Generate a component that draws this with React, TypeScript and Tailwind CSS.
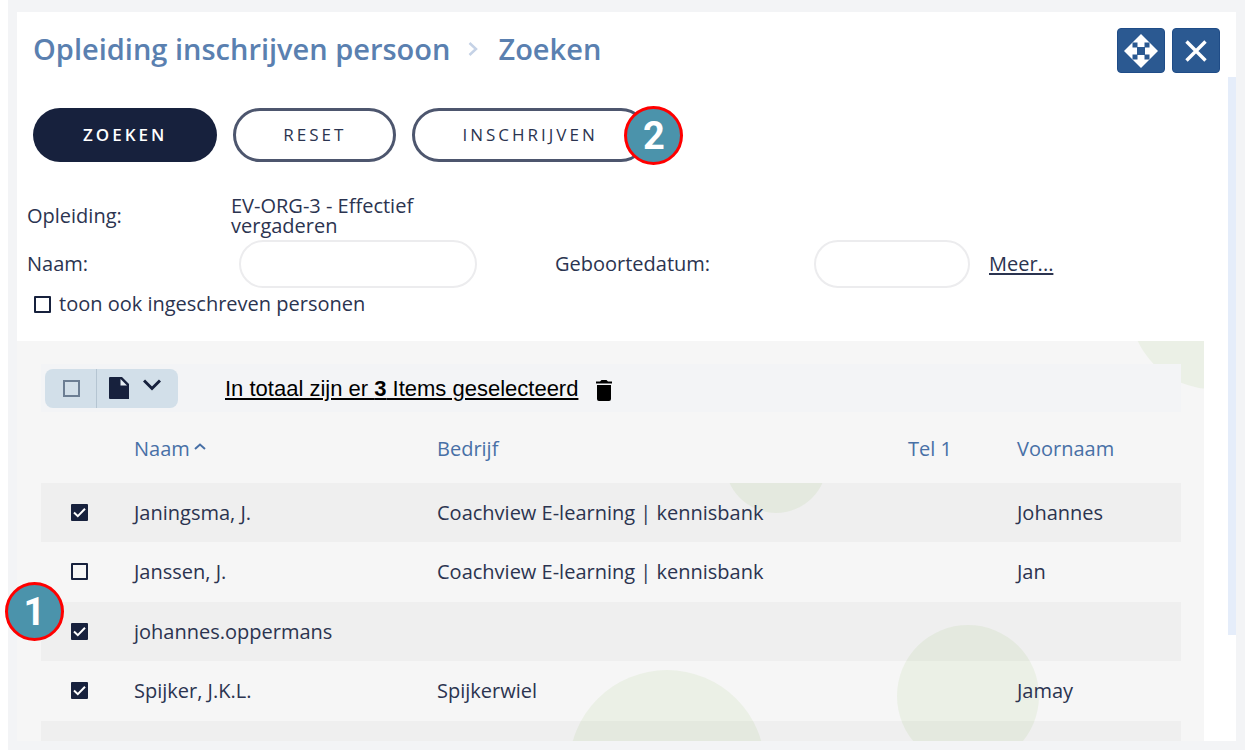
import React from 'react';

interface Person {
  name: string;
  company: string;
  phone: string;
  firstName: string;
  selected: boolean;
}

const people: Person[] = [
  { name: 'Janingsma, J.', company: 'Coachview E-learning | kennisbank', phone: '', firstName: 'Johannes', selected: true },
  { name: 'Janssen, J.', company: 'Coachview E-learning | kennisbank', phone: '', firstName: 'Jan', selected: false },
  { name: 'johannes.oppermans', company: '', phone: '', firstName: '', selected: true },
  { name: 'Spijker, J.K.L.', company: 'Spijkerwiel', phone: '', firstName: 'Jamay', selected: true },
];

const Checkbox: React.FC<React.InputHTMLAttributes<HTMLInputElement>> = (props) => (
  <span className="relative inline-flex">
    <input
      type="checkbox"
      {...props}
      className="peer size-[17px] appearance-none rounded-[1px] border-2 border-[#17213d] checked:bg-[#17213d]"
    />
    <svg
      viewBox="0 0 17 17"
      className="pointer-events-none absolute inset-0 hidden size-[17px] peer-checked:block"
      fill="none"
      stroke="white"
      strokeWidth="2"
    >
      <path d="M3 8.5 6.8 12.2 14 4.8" />
    </svg>
  </span>
);

const StepBadge: React.FC<{ step: number; className: string }> = ({ step, className }) => (
  <span
    className={`absolute z-10 flex size-[59px] items-center justify-center rounded-full border-3 border-[#ff0000] bg-[#4b93ab] font-['Roboto',sans-serif] text-[38px] leading-none font-bold text-white ${className}`}
  >
    {step}
  </span>
);

const Header: React.FC = () => (
  <header className="flex items-start justify-between pt-4 pr-4 pl-4">
    <h1 className="flex items-center text-[29px] leading-[42px] font-semibold text-[#5a80b0]">
      Opleiding inschrijven persoon
      <svg viewBox="0 0 10 16" className="mr-5 ml-4.5 h-4 w-2.5" fill="none" stroke="#c5d2e6" strokeWidth="2.5">
        <path d="M1.5 2 8 8 1.5 14" />
      </svg>
      Zoeken
    </h1>
    <div className="flex gap-[7px]">
      <button type="button" aria-label="Verplaatsen" className="flex h-[45px] w-12 items-center justify-center rounded-[4px] border border-[#1f4c87] bg-[#2b5991]">
        <svg viewBox="0 0 34 34" className="size-[34px]" fill="white">
          <path d="M17 0 34 17 17 34 0 17Z" />
          <path d="M8.5 8.5h5v5h-5zM20.5 8.5h5v5h-5zM8.5 20.5h5v5h-5zM20.5 20.5h5v5h-5zM13 13h8v8h-8z" fill="#2b5991" />
        </svg>
      </button>
      <button type="button" aria-label="Sluiten" className="flex h-[45px] w-12 items-center justify-center rounded-[4px] border border-[#1f4c87] bg-[#2b5991]">
        <svg viewBox="0 0 22 22" className="size-[22px]" fill="none" stroke="white" strokeWidth="3.4">
          <path d="M1.5 1.5 20.5 20.5M20.5 1.5 1.5 20.5" />
        </svg>
      </button>
    </div>
  </header>
);

const Actions: React.FC = () => (
  <div className="flex gap-4 pt-[31px] pl-4 text-[17px]">
    <button type="button" className="h-[54px] rounded-full bg-[#17213d] px-[50px] font-semibold tracking-[3px] text-white">
      ZOEKEN
    </button>
    <button type="button" className="h-[54px] rounded-full border-3 border-[#4d566e] px-[47px] tracking-[3px]">
      RESET
    </button>
    <div className="relative">
      <button type="button" className="h-[54px] rounded-full border-3 border-[#4d566e] px-[47px] tracking-[3px]">
        INSCHRIJVEN
      </button>
      <StepBadge step={2} className="-top-0.5 left-[212px]" />
    </div>
  </div>
);

const SearchForm: React.FC = () => (
  <form className="pt-[34px] pl-2.5">
    <div className="flex items-center">
      <span className="w-[204px]">Opleiding:</span>
      <span className="w-[220px] leading-5">EV-ORG-3 - Effectief vergaderen</span>
    </div>
    <div className="mt-1 flex items-center">
      <label htmlFor="naam" className="w-[212px]">Naam:</label>
      <input id="naam" type="text" className="h-12 w-[238px] rounded-full border-2 border-[#ececee] px-5" />
      <label htmlFor="geboortedatum" className="ml-[78px] w-[259px]">Geboortedatum:</label>
      <input id="geboortedatum" type="text" className="h-12 w-[156px] rounded-full border-2 border-[#ececee] px-5" />
      <a href="#meer" className="ml-[19px] underline underline-offset-2">Meer...</a>
    </div>
    <div className="flex h-8 items-center gap-2 pl-[7px]">
      <Checkbox id="ingeschreven" />
      <label htmlFor="ingeschreven">toon ook ingeschreven personen</label>
    </div>
  </form>
);

const Circles: React.FC = () => (
  <svg width="660" height="400" className="pointer-events-none absolute top-0 right-0" fill="#ebf0e6">
    <circle cx="669" cy="-35" r="83" />
    <circle cx="232" cy="121" r="51" />
    <circle cx="123" cy="427" r="98" />
    <circle cx="424" cy="355" r="71" />
  </svg>
);

const Toolbar: React.FC = () => (
  <div className="relative flex h-12 items-center bg-[#f3f4f6] pl-1">
    <div className="flex h-[39px] overflow-hidden rounded-lg bg-[#d2dfe9]">
      <label className="flex w-[52px] items-center justify-center border-r border-[#b5c5d2] pl-0.5">
        <input type="checkbox" aria-label="Alles selecteren" className="size-[17px] appearance-none border-2 border-[#6c7e93]" />
      </label>
      <button type="button" aria-label="Document" className="flex w-[81px] items-center pl-3">
        <svg viewBox="0 0 20 22" className="h-[22px] w-5" fill="#17213d">
          <path d="M1 0H13L20 7V22H1Q0 22 0 21V1Q0 0 1 0Z" />
          <path d="M11.5 2V8.5H18Z" fill="#e6eef4" />
        </svg>
        <svg viewBox="0 0 18 12" className="mb-1.5 ml-3.5 h-3 w-[18px]" fill="none" stroke="#17213d" strokeWidth="3">
          <path d="M1 1.5 9 9.5 17 1.5" />
        </svg>
      </button>
    </div>
    <a href="#selectie" className="ml-[47px] font-['Liberation_Sans',Arial,sans-serif] text-[22px] text-black underline underline-offset-2">
      In totaal zijn er <b>3</b> Items geselecteerd
    </a>
    <button type="button" aria-label="Selectie wissen" className="mt-1 ml-[18px]">
      <svg viewBox="0 0 16 21" className="h-[21px] w-4" fill="black">
        <path d="M0 1.5H4L5.5 0H10.5L12 1.5H16V3.5H0ZM1 5H15V19Q15 21 13 21H3Q1 21 1 19Z" />
      </svg>
    </button>
  </div>
);

const PeopleTable: React.FC = () => (
  <table className="relative w-full table-fixed text-left">
    <colgroup>
      <col className="w-[93px]" />
      <col className="w-[303px]" />
      <col />
      <col className="w-[109px]" />
      <col className="w-[164px]" />
    </colgroup>
    <thead>
      <tr className="h-[71px] bg-[#f6f6f6] text-[#4870a6]">
        <th />
        <th className="pt-0.5 font-normal">
          <button type="button" className="flex items-center gap-1">
            Naam
            <svg viewBox="0 0 12 7" className="mb-1 h-[7px] w-3" fill="none" stroke="currentColor" strokeWidth="2">
              <path d="M1 6 6 1.5 11 6" />
            </svg>
          </button>
        </th>
        <th className="pt-0.5 font-normal">Bedrijf</th>
        <th className="pt-0.5 font-normal">Tel 1</th>
        <th className="pt-0.5 font-normal">Voornaam</th>
      </tr>
    </thead>
    <tbody>
      {people.map((person) => (
        <tr key={person.name} className="h-[59px] odd:bg-black/[0.028] even:h-[60px]">
          <td className="pt-0.5 pl-[30px] leading-none">
            <Checkbox aria-label={person.name} defaultChecked={person.selected} />
          </td>
          <td>{person.name}</td>
          <td>{person.company}</td>
          <td>{person.phone}</td>
          <td>{person.firstName}</td>
        </tr>
      ))}
      <tr className="h-[59px] odd:bg-black/[0.028]">
        <td colSpan={5} />
      </tr>
    </tbody>
  </table>
);

export default function App() {
  return (
    <div className="relative h-screen bg-white pl-2 font-['Open_Sans',sans-serif] text-[20px] text-[#2b3450]">
      <div className="flex h-full flex-col bg-[#f3f4f6] pt-3 pr-[9px] pb-[9px] pl-[9px]">
        <main className="flex min-h-0 flex-1 flex-col overflow-hidden bg-white">
          <Header />
          <div className="flex min-h-0 flex-1 pt-1">
            <div className="min-w-0 flex-1 overflow-hidden">
              <Actions />
              <SearchForm />
              <section className="relative mt-[21px] overflow-hidden bg-[#f6f6f6] pt-[23px] pr-[23px] pl-6">
                <Circles />
                <Toolbar />
                <PeopleTable />
              </section>
            </div>
            <div className="ml-6 h-[84%] w-2 bg-[#e5edfa]" />
          </div>
        </main>
      </div>
      <StepBadge step={1} className="top-[582px] left-[5px]" />
    </div>
  );
}
